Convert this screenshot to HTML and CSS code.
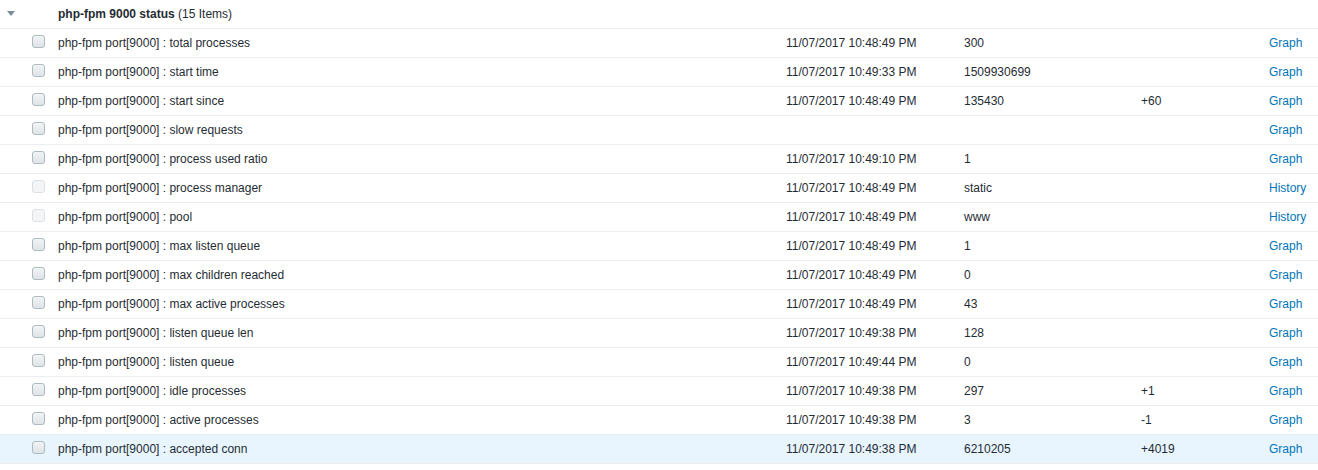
FILE: index.html
```html
<!DOCTYPE html>
<html lang="en">
<head>
    <meta charset="UTF-8">
    <title>php-fpm 9000 status</title>
    <link rel="stylesheet" href="styles.css">
</head>
<body>
    <table class="items">
        <colgroup>
            <col class="c-arrow">
            <col class="c-check">
            <col class="c-name">
            <col class="c-time">
            <col class="c-value">
            <col class="c-change">
            <col class="c-link">
        </colgroup>
        <tr class="group">
            <td><span class="arrow"></span></td>
            <td></td>
            <td colspan="5"><b>php-fpm 9000 status</b> (15 Items)</td>
        </tr>
        <tr>
            <td></td><td><span class="check"></span></td>
            <td>php-fpm port[9000] : total processes</td>
            <td>11/07/2017 10:48:49 PM</td><td>300</td><td></td>
            <td><a href="#">Graph</a></td>
        </tr>
        <tr>
            <td></td><td><span class="check"></span></td>
            <td>php-fpm port[9000] : start time</td>
            <td>11/07/2017 10:49:33 PM</td><td>1509930699</td><td></td>
            <td><a href="#">Graph</a></td>
        </tr>
        <tr>
            <td></td><td><span class="check"></span></td>
            <td>php-fpm port[9000] : start since</td>
            <td>11/07/2017 10:48:49 PM</td><td>135430</td><td>+60</td>
            <td><a href="#">Graph</a></td>
        </tr>
        <tr>
            <td></td><td><span class="check"></span></td>
            <td>php-fpm port[9000] : slow requests</td>
            <td></td><td></td><td></td>
            <td><a href="#">Graph</a></td>
        </tr>
        <tr>
            <td></td><td><span class="check"></span></td>
            <td>php-fpm port[9000] : process used ratio</td>
            <td>11/07/2017 10:49:10 PM</td><td>1</td><td></td>
            <td><a href="#">Graph</a></td>
        </tr>
        <tr>
            <td></td><td><span class="check disabled"></span></td>
            <td>php-fpm port[9000] : process manager</td>
            <td>11/07/2017 10:48:49 PM</td><td>static</td><td></td>
            <td><a href="#">History</a></td>
        </tr>
        <tr>
            <td></td><td><span class="check disabled"></span></td>
            <td>php-fpm port[9000] : pool</td>
            <td>11/07/2017 10:48:49 PM</td><td>www</td><td></td>
            <td><a href="#">History</a></td>
        </tr>
        <tr>
            <td></td><td><span class="check"></span></td>
            <td>php-fpm port[9000] : max listen queue</td>
            <td>11/07/2017 10:48:49 PM</td><td>1</td><td></td>
            <td><a href="#">Graph</a></td>
        </tr>
        <tr>
            <td></td><td><span class="check"></span></td>
            <td>php-fpm port[9000] : max children reached</td>
            <td>11/07/2017 10:48:49 PM</td><td>0</td><td></td>
            <td><a href="#">Graph</a></td>
        </tr>
        <tr>
            <td></td><td><span class="check"></span></td>
            <td>php-fpm port[9000] : max active processes</td>
            <td>11/07/2017 10:48:49 PM</td><td>43</td><td></td>
            <td><a href="#">Graph</a></td>
        </tr>
        <tr>
            <td></td><td><span class="check"></span></td>
            <td>php-fpm port[9000] : listen queue len</td>
            <td>11/07/2017 10:49:38 PM</td><td>128</td><td></td>
            <td><a href="#">Graph</a></td>
        </tr>
        <tr>
            <td></td><td><span class="check"></span></td>
            <td>php-fpm port[9000] : listen queue</td>
            <td>11/07/2017 10:49:44 PM</td><td>0</td><td></td>
            <td><a href="#">Graph</a></td>
        </tr>
        <tr>
            <td></td><td><span class="check"></span></td>
            <td>php-fpm port[9000] : idle processes</td>
            <td>11/07/2017 10:49:38 PM</td><td>297</td><td>+1</td>
            <td><a href="#">Graph</a></td>
        </tr>
        <tr>
            <td></td><td><span class="check"></span></td>
            <td>php-fpm port[9000] : active processes</td>
            <td>11/07/2017 10:49:38 PM</td><td>3</td><td>-1</td>
            <td><a href="#">Graph</a></td>
        </tr>
        <tr class="hover">
            <td></td><td><span class="check"></span></td>
            <td>php-fpm port[9000] : accepted conn</td>
            <td>11/07/2017 10:49:38 PM</td><td>6210205</td><td>+4019</td>
            <td><a href="#">Graph</a></td>
        </tr>
    </table>
</body>
</html>
```

FILE: styles.css
```css
body {
    margin: 0;
    background-color: #fff;
    font-family: "Liberation Sans", Arial, sans-serif;
    font-size: 12px;
    color: #1f2c33;
}
.items {
    width: 1318px;
    border-collapse: collapse;
    table-layout: fixed;
}
.c-arrow { width: 26px; }
.c-check { width: 26px; }
.c-name { width: 728px; }
.c-time { width: 178px; }
.c-value { width: 177px; }
.c-change { width: 128px; }
.items td {
    height: 28px;
    padding: 0 6px;
    border-bottom: 1px solid #ebeef0;
    white-space: nowrap;
    vertical-align: middle;
    line-height: 14px;
}
.items tr td:first-child {
    padding-left: 7px;
}
.items tr.hover td {
    background-color: #e8f5ff;
}
.arrow {
    display: inline-block;
    width: 0;
    height: 0;
    border-left: 4px solid transparent;
    border-right: 4px solid transparent;
    border-top: 5px solid #768d99;
    vertical-align: middle;
    margin-top: -3px;
}
.check {
    display: inline-block;
    width: 11px;
    height: 11px;
    border: 1px solid #acbbc2;
    border-radius: 3px;
    background: linear-gradient(#f2f4f5, #dfe4e7);
    vertical-align: middle;
    margin-top: -4px;
}
.check.disabled {
    border-color: #dbe1e4;
    background: #f4f5f6;
}
a {
    color: #0275b8;
    text-decoration: none;
}
```
